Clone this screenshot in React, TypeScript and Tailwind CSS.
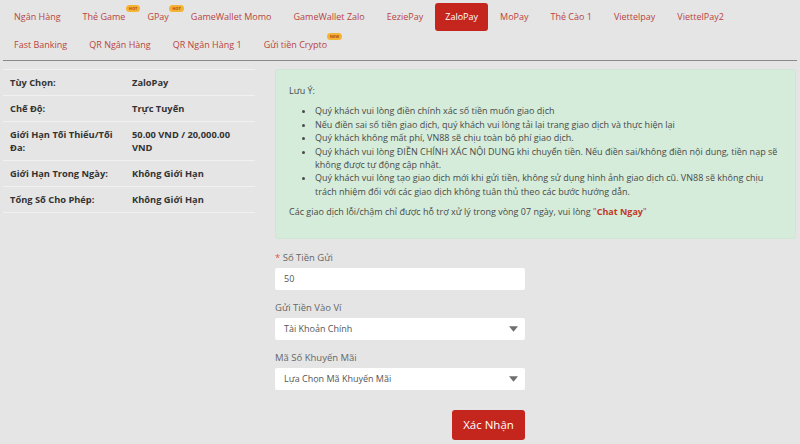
import React from 'react';

type Tab = { label: string; badge?: 'HOT' | 'NEW'; active?: boolean };

const row1: Tab[] = [
    { label: 'Ngân Hàng' },
    { label: 'Thẻ Game', badge: 'HOT' },
    { label: 'GPay', badge: 'HOT' },
    { label: 'GameWallet Momo' },
    { label: 'GameWallet Zalo' },
    { label: 'EeziePay' },
    { label: 'ZaloPay', active: true },
    { label: 'MoPay' },
    { label: 'Thẻ Cào 1' },
    { label: 'Viettelpay' },
    { label: 'ViettelPay2' },
];

const row2: Tab[] = [
    { label: 'Fast Banking' },
    { label: 'QR Ngân Hàng' },
    { label: 'QR Ngân Hàng 1' },
    { label: 'Gửi tiền Crypto', badge: 'NEW' },
];

const info: { label: string; value: string }[] = [
    { label: 'Tùy Chọn:', value: 'ZaloPay' },
    { label: 'Chế Độ:', value: 'Trực Tuyến' },
    { label: 'Giới Hạn Tối Thiểu/Tối Đa:', value: '50.00 VND / 20,000.00 VND' },
    { label: 'Giới Hạn Trong Ngày:', value: 'Không Giới Hạn' },
    { label: 'Tổng Số Cho Phép:', value: 'Không Giới Hạn' },
];

const notes = [
    'Quý khách vui lòng điền chính xác số tiền muốn giao dịch',
    'Nếu điền sai số tiền giao dịch, quý khách vui lòng tải lại trang giao dịch và thực hiện lại',
    'Quý khách không mất phí, VN88 sẽ chịu toàn bộ phí giao dịch.',
    'Quý khách vui lòng ĐIỀN CHÍNH XÁC NỘI DUNG khi chuyển tiền. Nếu điền sai/không điền nội dung, tiền nạp sẽ không được tự động cập nhật.',
    'Quý khách vui lòng tạo giao dịch mới khi gửi tiền, không sử dụng hình ảnh giao dịch cũ. VN88 sẽ không chịu trách nhiệm đối với các giao dịch không tuân thủ theo các bước hướng dẫn.',
];

const TabItem: React.FC<{ tab: Tab }> = ({ tab }) => (
    <div
        className={
            'relative shrink-0 whitespace-nowrap h-[28px] px-[10px] mx-[1px] flex items-center rounded-[3px] text-[9px] ' +
            (tab.active ? 'bg-[#c4261d] text-white' : 'text-[#b8443f]')
        }
    >
        {tab.label}
        {tab.badge && (
            <span className="absolute right-[-5px] top-[2px] h-[7px] px-[3px] rounded-full bg-[#f5b335] text-[4px] leading-[7px] font-bold text-[#b04a10]">
                {tab.badge}
            </span>
        )}
    </div>
);

const Caret = () => (
    <svg width="9" height="6" viewBox="0 0 10 6" className="text-[#6f6f6f]">
        <path d="M0 0h10L5 6z" fill="currentColor" />
    </svg>
);

export default function App() {
    return (
        <div className="w-[800px] h-[444px] bg-[#e5e5e5] overflow-hidden px-[3px] pt-[3px]" style={{ fontFamily: '"Open Sans", sans-serif' }}>
            <div className="border-b border-[#8a8a8a] pb-[1px]">
                <div className="flex">
                    {row1.map(t => <TabItem key={t.label} tab={t} />)}
                </div>
                <div className="flex">
                    {row2.map(t => <TabItem key={t.label} tab={t} />)}
                </div>
            </div>

            <div className="flex gap-[20px] mt-[8px]">
                <div className="w-[252px] shrink-0">
                    {info.map(r => (
                        <div key={r.label} className="flex border-t border-[#f1f1f1] py-[6px] text-[9.3px] leading-[13px] font-bold text-[#333]">
                            <div className="w-[129px] pl-[7px] pr-[8px]">{r.label}</div>
                            <div className="flex-1 pr-[20px]">{r.value}</div>
                        </div>
                    ))}
                    <div className="border-t border-[#f1f1f1]" />
                </div>

                <div className="flex-1 pr-[1px]">
                    <div className="bg-[#d4ecd9] border border-[#cfe6d4] rounded-[3px] px-[13px] pt-[14px] pb-[19px] text-[9px] leading-[13.4px] text-[#4a4a4a]">
                        <p>Lưu Ý:</p>
                        <ul className="list-disc pl-[26px] my-[7px]">
                            {notes.map(n => <li key={n}>{n}</li>)}
                        </ul>
                        <p>
                            Các giao dịch lỗi/chậm chỉ được hỗ trợ xử lý trong vòng 07 ngày, vui lòng{' '}
                            <span className="text-[#c0392b]">"<span className="font-bold">Chat Ngay</span>"</span>
                        </p>
                    </div>

                    <div className="w-[250px] mt-[12px] text-[9.5px] text-[#666]">
                        <div className="leading-[13px]"><span className="text-[#e0504a]">* </span>Số Tiền Gửi</div>
                        <div className="mt-[4px] h-[22px] bg-white rounded-[2px] px-[9px] flex items-center text-[9px] text-[#555]">50</div>

                        <div className="mt-[11px] leading-[13px]">Gửi Tiền Vào Ví</div>
                        <div className="mt-[4px] h-[22px] bg-white rounded-[2px] pl-[9px] pr-[7px] flex items-center justify-between text-[9px] text-[#555]">
                            <span>Tài Khoản Chính</span>
                            <Caret />
                        </div>

                        <div className="mt-[11px] leading-[13px]">Mã Số Khuyến Mãi</div>
                        <div className="mt-[4px] h-[22px] bg-white rounded-[2px] pl-[9px] pr-[7px] flex items-center justify-between text-[9px] text-[#555]">
                            <span>Lựa Chọn Mã Khuyến Mãi</span>
                            <Caret />
                        </div>

                        <div className="flex justify-end mt-[20px]">
                            <button className="w-[73px] h-[30px] bg-[#c4261d] rounded-[3px] text-white text-[11.5px]">Xác Nhận</button>
                        </div>
                    </div>
                </div>
            </div>
        </div>
    );
}
